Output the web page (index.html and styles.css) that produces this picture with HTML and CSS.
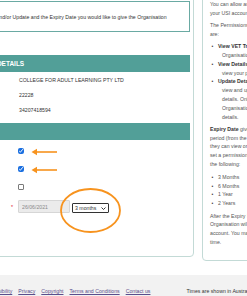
FILE: index.html
```html
<!DOCTYPE html>
<html lang="en">
<head>
  <meta charset="UTF-8">
  <meta name="viewport" content="width=device-width, initial-scale=1.0">
  <title>Provide Permissions</title>
  <link rel="stylesheet" href="styles.css">
</head>
<body>
  <div class="content">
    <div class="panel main-panel">
      <div class="intro">Select View and/or Update and the Expiry Date you would like to give the Organisation</div>

      <div class="section-title">ORGANISATION DETAILS</div>
      <div class="detail-row first">
        <span class="label">Organisation Name</span>
        <span class="value">COLLEGE FOR ADULT LEARNING PTY LTD</span>
      </div>
      <div class="detail-row">
        <span class="label">Organisation Code</span>
        <span class="value">22228</span>
      </div>
      <div class="detail-row">
        <span class="label">ABN</span>
        <span class="value">34207418594</span>
      </div>

      <div class="section-title second">PERMISSIONS</div>
      <div class="perm-row first">
        <span class="label">View VET Transcript</span>
        <input type="checkbox" checked>
      </div>
      <div class="perm-row">
        <span class="label">View Details</span>
        <input type="checkbox" checked>
      </div>
      <div class="perm-row">
        <span class="label">Update Details</span>
        <input type="checkbox">
      </div>
      <div class="date-row">
        <span class="label date-label">Expiry Date <span class="required">*</span></span>
        <div class="date-controls">
          <input class="date-field" type="text" value="26/06/2021" readonly>
          <div class="select-box">
            <span>3 months</span>
            <svg width="5" height="3" viewBox="0 0 5 3"><path d="M0.5 0.5 L2.5 2.5 L4.5 0.5" fill="none" stroke="#222" stroke-width="0.9"/></svg>
          </div>
        </div>
      </div>
    </div>

    <div class="panel help-panel">
      <p>You can allow an Organisation to view and/or update<br>your USI account details.</p>
      <p>The Permissions you can give an Organisation<br>are:</p>
      <ul class="help-list">
        <li><strong>View VET Transcript</strong> - allows the<br>Organisation to view your VET transcript.</li>
        <li><strong>View Details</strong> - allows the Organisation to<br>view your personal details.</li>
        <li><strong>Update Details</strong> - allows the Organisation to<br>view and update your personal<br>details. Only give this permission to an<br>Organisation you trust to update your<br>details.</li>
      </ul>
      <p><strong>Expiry Date</strong> gives the Organisation a<br>period (from the date you set permissions) in which<br>they can view or update your account. You can<br>set a permission to expire after any of<br>the following:</p>
      <ul class="help-list periods">
        <li>3 Months</li>
        <li>6 Months</li>
        <li>1 Year</li>
        <li>2 Years</li>
      </ul>
      <p class="last">After the Expiry Date has passed the<br>Organisation will no longer have access to your<br>account. You may remove permissions at any<br>time.</p>
    </div>
  </div>

  <footer>
    <nav class="footer-links">
      <a href="#">Accessibility</a>
      <a href="#">Privacy</a>
      <a href="#">Copyright</a>
      <a href="#">Terms and Conditions</a>
      <a href="#">Contact us</a>
    </nav>
    <p class="timezone">Times are shown in Australian Eastern Standard Time</p>
  </footer>

  <!-- annotations drawn over the screenshot -->
  <svg class="marks" width="247" height="296" viewBox="0 0 247 296">
    <g stroke="#f7931e" stroke-width="1.6" fill="#f7931e">
      <line x1="57" y1="152" x2="35" y2="152"/>
      <polygon points="31.5,152 37,148.8 37,155.2" stroke="none"/>
      <line x1="57" y1="170" x2="35" y2="170"/>
      <polygon points="31.5,170 37,166.8 37,173.2" stroke="none"/>
      <ellipse cx="90.5" cy="210.5" rx="29.5" ry="21.5" fill="none" stroke-width="1.8"/>
    </g>
  </svg>
</body>
</html>
```

FILE: styles.css
```css
body {
  font-family: "Liberation Sans", Arial, sans-serif;
  font-size: 5.2px;
  color: #333;
  margin: 0;
  width: 247px;
  height: 296px;
  overflow: hidden;
  position: relative;
  background: #fff;
}
.content {
  display: flex;
  align-items: flex-start;
  gap: 8px;
  margin-left: -60px;
  margin-top: -10px;
}
.panel {
  border: 1px solid #c3dad6;
  border-radius: 4px;
  background: #fff;
  box-sizing: border-box;
}
.main-panel {
  width: 254px;
  flex-shrink: 0;
  padding: 10px 3px 43px 3px;
}
.intro {
  border: 1px solid #6aaaa3;
  padding: 10.5px 4px 10.5px 23px;
  line-height: 8px;
  white-space: nowrap;
}
.section-title {
  margin-top: 23px;
  height: 17px;
  line-height: 17px;
  background: #529f98;
  color: #fff;
  font-weight: bold;
  font-size: 6.5px;
  padding-left: 1px;
  white-space: nowrap;
}
.section-title.second {
  margin-top: 9px;
}
.detail-row, .perm-row, .date-row {
  display: grid;
  grid-template-columns: 70px 1fr;
  column-gap: 5px;
}
.detail-row {
  line-height: 8px;
  margin-top: 7px;
}
.detail-row.first {
  margin-top: 4px;
}
.label {
  white-space: nowrap;
}
.perm-row {
  height: 18px;
  align-items: center;
}
.perm-row.first {
  margin-top: 2px;
}
.perm-row input {
  width: 6px;
  height: 6px;
  margin: 0 0 0 -1px;
  accent-color: #1a6fe0;
}
.perm-row input:not(:checked) {
  appearance: none;
  box-sizing: border-box;
  border: 1px solid #7a7a7a;
  border-radius: 1px;
  background: #fff;
}
.date-row {
  margin-top: 4px;
  align-items: end;
}
.date-label {
  display: flex;
  justify-content: space-between;
  align-self: center;
}
.required {
  color: #e0102a;
  margin-right: 1px;
}
.date-controls {
  display: flex;
  align-items: flex-end;
  gap: 2px;
  margin-left: -1px;
}
.date-field {
  width: 52px;
  height: 13px;
  box-sizing: border-box;
  border: 1px solid #d6d6d6;
  border-radius: 1px;
  background: #ebebeb;
  color: #8a8a8a;
  font: inherit;
  padding: 0 0 0 3px;
  margin: 0;
}
.select-box {
  width: 37px;
  height: 10px;
  box-sizing: border-box;
  border: 1px solid #333;
  border-radius: 1px;
  display: flex;
  align-items: center;
  justify-content: space-between;
  padding: 0 2px 0 2px;
  color: #333;
}
.help-panel {
  width: 160px;
  flex-shrink: 0;
  padding: 9px 0 13px 7px;
  line-height: 8.8px;
  color: #555;
  white-space: nowrap;
}
.help-panel strong {
  color: #333;
}
.help-panel p {
  margin: 0 0 3.5px 0;
}
.help-panel p.last {
  margin-bottom: 0;
}
.help-list {
  list-style: none;
  margin: 0 0 3.5px 0;
  padding: 0 0 0 12px;
}
.help-list li {
  text-indent: -10.5px;
}
.help-list li::before {
  content: "\2022";
  display: inline-block;
  width: 6.5px;
  text-indent: 0;
  color: #444;
}
.help-list.periods {
  margin-top: 4px;
}
footer {
  display: flex;
  margin-top: 14px;
  padding-top: 12px;
  height: 30px;
  background: #f2f2f2;
  line-height: 8px;
  white-space: nowrap;
}
.footer-links {
  display: flex;
  gap: 6px;
  margin-left: -16px;
}
.footer-links a {
  color: #5a4e8c;
}
.timezone {
  margin: 0 0 0 36px;
  color: #333;
}
.marks {
  position: absolute;
  left: 0;
  top: 0;
  pointer-events: none;
}
```
